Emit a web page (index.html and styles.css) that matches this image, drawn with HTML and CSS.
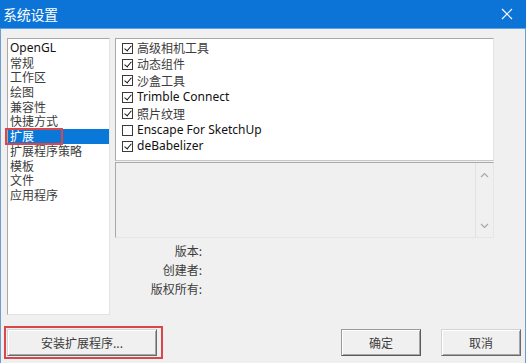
FILE: index.html
```html
<!DOCTYPE html>
<html lang="zh">
<head>
<meta charset="utf-8">
<title>系统设置</title>
<link rel="stylesheet" href="styles.css">
</head>
<body>
<div class="window">
  <div class="titlebar">
    <span class="title">系统设置</span>
    <svg class="close" width="12" height="12" viewBox="0 0 12 12"><path d="M1 1L11 11M11 1L1 11" stroke="#fff" stroke-width="1.2" fill="none"/></svg>
  </div>
  <div class="content">
    <div class="main">
      <ul class="nav">
        <li class="latin">OpenGL</li>
        <li>常规</li>
        <li>工作区</li>
        <li>绘图</li>
        <li>兼容性</li>
        <li>快捷方式</li>
        <li class="selected"><span class="mark nav-mark"></span>扩展</li>
        <li>扩展程序策略</li>
        <li>模板</li>
        <li>文件</li>
        <li>应用程序</li>
      </ul>
      <div class="right">
        <ul class="exts">
          <li><span class="cb on"></span>高级相机工具</li>
          <li><span class="cb on"></span>动态组件</li>
          <li><span class="cb on"></span>沙盒工具</li>
          <li class="latin"><span class="cb on"></span>Trimble Connect</li>
          <li><span class="cb on"></span>照片纹理</li>
          <li class="latin"><span class="cb"></span>Enscape For SketchUp</li>
          <li class="latin"><span class="cb on"></span>deBabelizer</li>
        </ul>
        <div class="desc">
          <div class="desc-text"></div>
          <div class="scroll">
            <svg width="9" height="6" viewBox="0 0 9 6"><path d="M1 5L4.5 1.5L8 5" stroke="#a8a8a8" stroke-width="1.2" fill="none"/></svg>
            <svg width="9" height="6" viewBox="0 0 9 6"><path d="M1 1L4.5 4.5L8 1" stroke="#a8a8a8" stroke-width="1.2" fill="none"/></svg>
          </div>
        </div>
        <div class="info">
          <span class="lbl">版本:</span><span></span>
          <span class="lbl">创建者:</span><span></span>
          <span class="lbl">版权所有:</span><span></span>
        </div>
      </div>
    </div>
    <div class="buttons">
      <button class="btn install"><span class="mark btn-mark"></span>安装扩展程序...</button>
      <div class="spacer"></div>
      <button class="btn small default">确定</button>
      <button class="btn small">取消</button>
    </div>
  </div>
</div>
</body>
</html>
```
FILE: styles.css
```css
* { box-sizing: border-box; }
html, body { margin: 0; padding: 0; background: #ffffff; }
body {
  font-family: "Noto Sans CJK SC", "Noto Sans", sans-serif;
  font-size: 12px;
  color: #3c3c3c;
}
.window {
  width: 526px;
  height: 363px;
  display: flex;
  flex-direction: column;
  background: #f0f0f0;
}
.titlebar {
  height: 29px;
  background: #0b74d6;
  display: flex;
  align-items: center;
  padding: 0 13px 0 3px;
  border-bottom: 1px solid #5fa3e6;
}
.title {
  color: #ffffff;
  font-size: 14px;
  letter-spacing: -0.3px;
  flex: 1;
}
.close { display: block; }
.content {
  flex: 1;
  border-left: 1px solid #6d9ccf;
  border-right: 1px solid #6d9ccf;
  padding: 9px 4px 0 6px;
  display: flex;
  flex-direction: column;
}
.main {
  display: flex;
  gap: 5px;
  height: 277px;
}
ul { list-style: none; margin: 0; }
.nav {
  width: 103px;
  height: 277px;
  background: #ffffff;
  border: 1px solid;
  border-color: #a9a9a9 #e3e3e3 #e3e3e3 #a9a9a9;
  padding: 2px 0 0 0;
}
.nav li {
  position: relative;
  line-height: 14.7px;
  height: 14.7px;
  padding-left: 2px;
  white-space: nowrap;
}
.latin { color: #111; font-family: "Noto Sans", sans-serif; }
.nav li.selected {
  background: #0a78d8;
  color: #ffffff;
}
.mark {
  position: absolute;
  border: 2px solid #d9474a;
  pointer-events: none;
}
.nav-mark {
  left: -3px;
  top: -1px;
  width: 58px;
  height: 17px;
}
.right {
  width: 379px;
  display: flex;
  flex-direction: column;
}
.exts {
  height: 123px;
  background: #ffffff;
  border: 1px solid;
  border-color: #a9a9a9 #e3e3e3 #c8c8c8 #a9a9a9;
  padding: 1px 0 0 6px;
}
.exts li {
  display: flex;
  align-items: center;
  height: 16.4px;
  line-height: 16.4px;
  white-space: nowrap;
}
.cb {
  width: 11px;
  height: 11px;
  border: 1px solid #3a3a3a;
  background: #ffffff;
  margin-right: 4px;
  flex: none;
  position: relative;
}
.cb.on::after {
  content: "";
  position: absolute;
  left: 3px;
  top: 0px;
  width: 3px;
  height: 6px;
  border: solid #1a1a1a;
  border-width: 0 1.5px 1.5px 0;
  transform: rotate(40deg);
}
.desc {
  margin-top: 1px;
  height: 76px;
  display: flex;
  border: 1px solid;
  border-color: #a9a9a9 #e6e6e6 #e6e6e6 #a9a9a9;
}
.desc-text { flex: 1; }
.scroll {
  width: 18px;
  border-left: 1px solid #e2e2e2;
  display: flex;
  flex-direction: column;
  justify-content: space-between;
  align-items: center;
  padding: 9px 0 8px 0;
}
.scroll svg { display: block; }
.info {
  margin-top: 3px;
  display: grid;
  grid-template-columns: 87px 1fr;
  grid-auto-rows: 19px;
  line-height: 19px;
}
.lbl { text-align: right; }
.buttons {
  margin-top: 14px;
  display: flex;
  gap: 20px;
  height: 27px;
}
.spacer { flex: 1; }
.btn {
  position: relative;
  height: 27px;
  font-family: inherit;
  font-size: 12px;
  color: #3c3c3c;
  background: #f0f0f0;
  border: 1px solid;
  border-color: #d4d4d4 #6a6a6a #6a6a6a #d4d4d4;
  box-shadow: inset 1px 1px 0 #ffffff, inset -1px -1px 0 #a6a6a6;
  padding: 0;
}
.install { width: 150px; margin-right: -20px; }
.small { width: 80px; }
.default { border-color: #9a9a9a #5a5a5a #5a5a5a #9a9a9a; }
.btn-mark {
  left: -4px;
  top: -4px;
  right: -7px;
  bottom: -4px;
}
```
